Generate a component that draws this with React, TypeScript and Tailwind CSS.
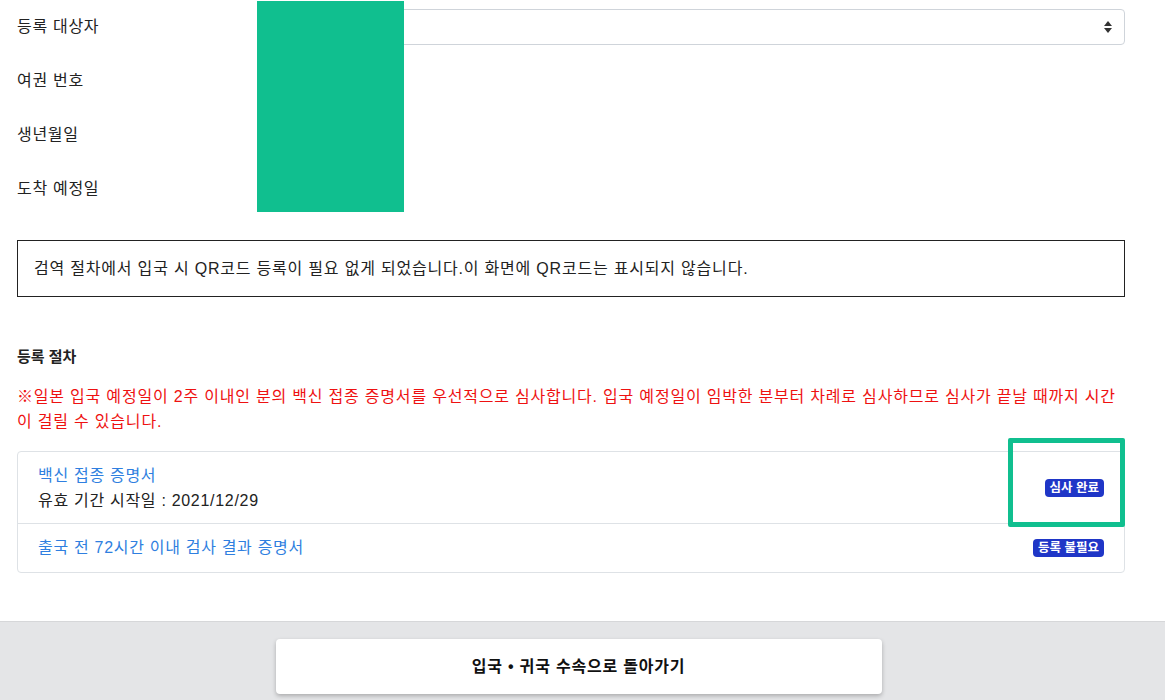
export default function App() {
  const font = { fontFamily: '"Liberation Sans", "Noto Sans CJK KR", sans-serif' };
  const rows = ["등록 대상자", "여권 번호", "생년월일", "도착 예정일"];

  return (
    <div className="relative min-h-[700px] bg-white text-[#222]" style={font}>
      <div className="pl-[17px] w-[1125px]">
        {rows.map((label, i) => (
          <div key={label} className="flex h-[54px] items-center">
            <div className="w-[240px] text-[16px] tracking-[0.7px]">{label}</div>
            {i === 0 && (
              <div className="flex-1 h-[36px] border border-[#cfd4da] rounded-[4px] flex items-center justify-end pr-[12px]">
                <svg width="8" height="12" viewBox="0 0 8 12" className="fill-[#333]">
                  <path d="M4 0 L8 5 L0 5 Z" />
                  <path d="M0 7 L8 7 L4 12 Z" />
                </svg>
              </div>
            )}
          </div>
        ))}

        <div className="mt-[24px] h-[57px] border border-[#222] flex items-center px-[16px] text-[16px] tracking-[0.8px]">
          검역 절차에서 입국 시 QR코드 등록이 필요 없게 되었습니다.이 화면에 QR코드는 표시되지 않습니다.
        </div>

        <h2 className="mt-[49px] text-[15px] font-bold leading-[22px]">등록 절차</h2>
        <p className="mt-[16px] text-[16px] tracking-[0.8px] leading-[25px] text-[#ee1111] break-all">
          ※일본 입국 예정일이 2주 이내인 분의 백신 접종 증명서를 우선적으로 심사합니다. 입국 예정일이 임박한 분부터 차례로 심사하므로 심사가 끝날 때까지 시간이 걸릴 수 있습니다.
        </p>

        <div className="mt-[17px] border border-[#dee2e6] rounded-[4px]">
          <div className="flex items-center justify-between h-[72px] px-[20px] border-b border-[#dee2e6]">
            <div className="text-[16px] tracking-[0.7px] leading-[25px]">
              <div className="text-[#2f7fe0]">백신 접종 증명서</div>
              <div>유효 기간 시작일 : 2021/12/29</div>
            </div>
            <span className="bg-[#1f36c7] text-white text-[12.5px] font-bold leading-[18px] px-[5px] rounded-[4px]">심사 완료</span>
          </div>
          <div className="flex items-center justify-between h-[48px] px-[20px]">
            <div className="text-[16px] tracking-[0.7px] text-[#2f7fe0]">출국 전 72시간 이내 검사 결과 증명서</div>
            <span className="bg-[#1f36c7] text-white text-[12.5px] font-bold leading-[18px] px-[5px] rounded-[4px]">등록 불필요</span>
          </div>
        </div>
      </div>

      <div className="mt-[48px] bg-[#e4e5e7] border-t border-[#d6d7d9] h-[79px] pt-[17px] pr-[8px] flex justify-center">
        <button className="w-[606px] h-[55px] bg-white rounded-[4px] shadow-[0_2px_4px_rgba(0,0,0,0.25)] text-[16px] tracking-[0.8px] font-bold text-[#111]">
          입국 • 귀국 수속으로 돌아가기
        </button>
      </div>

      <div className="absolute left-[257px] top-[1px] w-[147px] h-[211px] bg-[#10bf8f]" />
      <div className="absolute left-[1008px] top-[438px] w-[117px] h-[89px] border-[5px] border-[#10bf8f] rounded-[2px]" />
    </div>
  );
}
